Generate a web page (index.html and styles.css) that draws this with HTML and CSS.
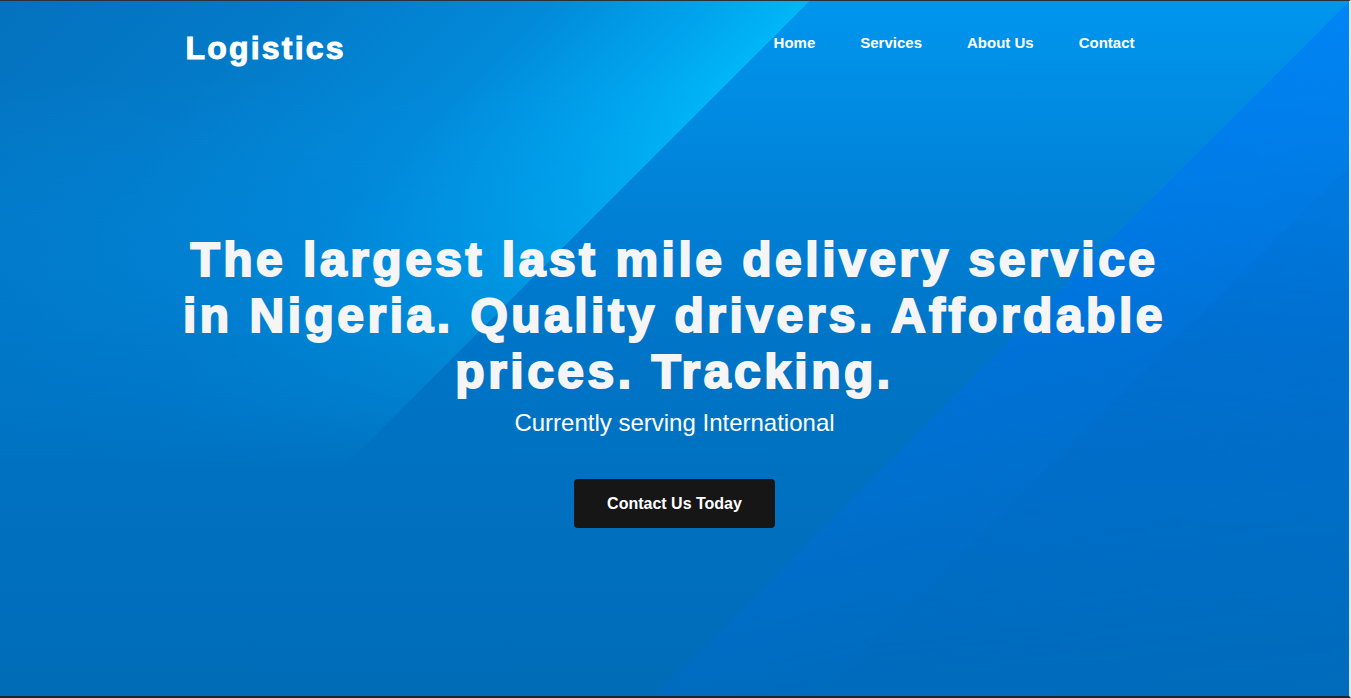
FILE: index.html
```html
<!DOCTYPE html>
<html lang="en">
<head>
<meta charset="utf-8">
<title>Logistics</title>
<link rel="stylesheet" href="styles.css">
</head>
<body>
<div class="page">
  <header class="site-header">
    <div class="container header-row">
      <a class="logo" href="#">Logistics</a>
      <nav class="nav">
        <a href="#">Home</a>
        <a href="#">Services</a>
        <a href="#">About Us</a>
        <a href="#">Contact</a>
      </nav>
    </div>
  </header>
  <main class="hero">
    <div class="container hero-inner">
      <h1 class="hero-title">The largest last mile delivery service in Nigeria. Quality drivers. Affordable prices. Tracking.</h1>
      <p class="hero-sub">Currently serving International</p>
      <a class="btn" href="#">Contact Us Today</a>
    </div>
  </main>
  <div class="scroll-thumb"></div>
</div>
</body>
</html>
```
FILE: styles.css
```css
* { box-sizing: border-box; }
html, body { margin: 0; padding: 0; }
body {
  font-family: "Liberation Sans", Arial, sans-serif;
  color: #fff;
  background: #1c232b;
}
a { color: inherit; text-decoration: none; }

.page {
  position: relative;
  height: 698px;
  display: flex;
  flex-direction: column;
  border-top: 1px solid #2a3138;
  border-right: 2px solid #d6e9f6;
  border-bottom: 2px solid #1c232b;
  background: linear-gradient(180deg, #0096ee 0%, #0084da 25%, #0074c6 50%, #006cb8 100%);
  overflow: hidden;
}
.page::before {
  content: "";
  position: absolute;
  inset: 0;
  background: linear-gradient(135deg, #0472be 0%, #037ac8 14%, #028ad9 27%, #00a4ee 35%, #00b6f7 39.6%, transparent 39.6%);
  -webkit-mask-image: linear-gradient(to bottom, #000 0%, #000 12%, transparent 68%);
  mask-image: linear-gradient(to bottom, #000 0%, #000 12%, transparent 68%);
  pointer-events: none;
}
.page::after {
  content: "";
  position: absolute;
  inset: 0;
  background: linear-gradient(135deg, transparent 66%, rgba(0, 110, 255, 0.42) 66%, rgba(0, 105, 255, 0.34) 74.1%, rgba(0, 95, 240, 0.3) 74.1%, rgba(0, 95, 240, 0.22) 100%);
  -webkit-mask-image: linear-gradient(to bottom, #000 0%, rgba(0,0,0,0.85) 40%, rgba(0,0,0,0.25) 100%);
  mask-image: linear-gradient(to bottom, #000 0%, rgba(0,0,0,0.85) 40%, rgba(0,0,0,0.25) 100%);
  pointer-events: none;
}
.site-header, .hero { position: relative; z-index: 1; }
.scroll-thumb {
  position: absolute;
  left: 332px;
  bottom: -2px;
  width: 36px;
  height: 2px;
  background: #4a4d52;
  z-index: 2;
}

.container {
  position: relative;
  width: 980px;
  margin: 0 auto;
}

.site-header { padding-top: 27px; }
.header-row {
  display: flex;
  justify-content: space-between;
  align-items: flex-start;
}
.logo {
  margin-left: 1px;
  font-size: 32px;
  font-weight: 700;
  line-height: 40px;
  letter-spacing: 2.2px;
  -webkit-text-stroke: 1px #fff;
}
.nav {
  display: flex;
  gap: 45px;
  padding-top: 6px;
  padding-right: 30px;
}
.nav a {
  font-size: 15px;
  font-weight: 700;
  line-height: 17px;
}

.hero {
  flex: 1;
  display: flex;
  flex-direction: column;
  justify-content: center;
  padding-bottom: 4px;
}
.hero-inner {
  display: flex;
  flex-direction: column;
  align-items: center;
  text-align: center;
}
.hero-title {
  margin: 0 -14px;
  font-size: 48px;
  font-weight: 700;
  line-height: 56px;
  letter-spacing: 3.5px;
  color: #f5f5f5;
  -webkit-text-stroke: 2px #f5f5f5;
}
.hero-sub {
  margin: 9px 0 0;
  font-size: 24px;
  line-height: 27.6px;
}
.btn {
  margin-top: 43px;
  display: inline-block;
  padding: 15px 33px;
  font-size: 16px;
  font-weight: 700;
  line-height: 19px;
  background: #161616;
  border-radius: 4px;
  color: #fff;
}
```
